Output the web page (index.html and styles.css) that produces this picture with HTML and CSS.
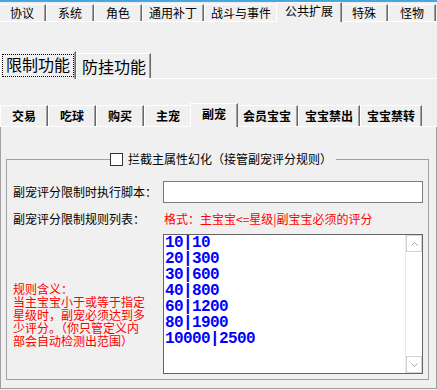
FILE: index.html
```html
<!DOCTYPE html>
<html lang="zh-CN">
<head>
  <meta charset="UTF-8">
  <title>公共扩展 - 副宠</title>
  <link rel="stylesheet" href="styles.css">
</head>
<body>
  <div class="titlebar"></div>

  <!-- top level tabs -->
  <nav class="tabs tabs-top">
    <span class="tab">协议</span>
    <span class="tab">系统</span>
    <span class="tab">角色</span>
    <span class="tab">通用补丁</span>
    <span class="tab">战斗与事件</span>
    <span class="tab active">公共扩展</span>
    <span class="tab">特殊</span>
    <span class="tab">怪物</span>
  </nav>

  <nav class="tabs tabs-big">
    <span class="tab active"><span class="focus">限制功能</span></span>
    <span class="tab">防挂功能</span>
  </nav>

  <nav class="tabs tabs-bold">
    <span class="tab">交易</span>
    <span class="tab">吃球</span>
    <span class="tab">购买</span>
    <span class="tab">主宠</span>
    <span class="tab active">副宠</span>
    <span class="tab">会员宝宝</span>
    <span class="tab">宝宝禁出</span>
    <span class="tab">宝宝禁转</span>
  </nav>

  <div class="panel">
    <fieldset class="group">
      <legend><span class="check"></span>拦截主属性幻化（接管副宠评分规则）</legend>
      <div class="form">
        <label class="label">副宠评分限制时执行脚本：</label>
        <div class="input"></div>

        <label class="label label-small">副宠评分限制规则列表：</label>
        <div class="hint">格式：主宝宝&lt;=星级|副宝宝必须的评分</div>

        <div class="note">规则含义：<br>当主宝宝小于或等于指定<br>星级时，副宠必须达到多<br>少评分。（你只管定义内<br>部会自动检测出范围）</div>
        <div class="memo">
          <div class="memo-text">10|10
20|300
30|600
40|800
60|1200
80|1900
10000|2500</div>
          <div class="scroll">
            <span class="scroll-btn"><svg width="7" height="4" viewBox="0 0 7 4"><polyline points="0.5,3.5 3.5,0.5 6.5,3.5" fill="none" stroke="#a0a0a0"/></svg></span>
            <span class="scroll-btn"><svg width="7" height="4" viewBox="0 0 7 4"><polyline points="0.5,0.5 3.5,3.5 6.5,0.5" fill="none" stroke="#a0a0a0"/></svg></span>
          </div>
        </div>
      </div>
    </fieldset>
  </div>
</body>
</html>
```

FILE: styles.css
```css
* {
  box-sizing: border-box;
}
body {
  margin: 0;
  width: 437px;
  height: 390px;
  overflow: hidden;
  background: #f0f0f0;
  color: #000;
  font-family: "Noto Sans CJK SC", "Noto Sans", sans-serif;
  font-size: 12px;
}
.titlebar {
  height: 2px;
  background: #48a6e0;
}

/* tab strips */
.tabs {
  display: flex;
  align-items: flex-end;
  border-bottom: 1px solid #fff;
}
.tab {
  border-top: 1px solid #fff;
  border-left: 1px solid #fff;
  border-right: 1px solid #696969;
  box-shadow: inset -1px 0 #a0a0a0;
  background: #f0f0f0;
  white-space: nowrap;
  text-align: center;
}
.tab.active {
  position: relative;
  z-index: 1;
  margin-bottom: -1px;
}

.tabs-top {
  height: 20px;
}
.tabs-top .tab {
  height: 17px;
  line-height: 16px;
  min-width: 48px;
  padding: 0 6px;
}
.tabs-top .tab:first-child {
  margin-left: -2px;
}
.tabs-top .tab.active {
  height: 20px;
  margin: 0 -2px -1px;
  padding: 0 8px 3px;
}

.tabs-big {
  height: 57px;
  padding-top: 29px;
}
.tabs-big .tab {
  font-size: 16px;
  height: 25px;
  line-height: 25px;
  padding: 0 4px 0 5px;
}
.tabs-big .tab.active {
  height: 28px;
  padding: 2px 1px;
}
.focus {
  display: block;
  border: 1px dotted #000;
  padding: 0 3px 2px;
  line-height: 19px;
}

.tabs-bold {
  height: 48px;
  padding-top: 24px;
}
.tabs-bold .tab {
  font-weight: bold;
  height: 21px;
  line-height: 20px;
  min-width: 48px;
  padding: 0 6px;
}
.tabs-bold .tab.active {
  height: 24px;
  margin: 0 -2px -1px;
  padding: 0 8px 3px;
  line-height: 19px;
}

/* page */
.panel {
  border-left: 1px solid #a0a0a0;
  border-right: 1px solid #a0a0a0;
  border-bottom: 1px solid #a0a0a0;
  padding: 25px 7px 8px 5px;
}
.group {
  margin: 0;
  min-width: 0;
  border: 1px solid #a0a0a0;
  padding: 15px 5px 5px 6px;
}
.group legend {
  display: flex;
  align-items: center;
  height: 14px;
  line-height: 14px;
  margin-left: 97px;
  padding: 0 4px 0 0;
}
.check {
  width: 13px;
  height: 13px;
  margin-right: 5px;
  border: 1px solid #333;
  background: #fff;
}

.form {
  display: grid;
  grid-template-columns: 150px 1fr;
  grid-template-rows: 22px 15px 140px;
  row-gap: 8px;
}
.label {
  line-height: 22px;
}
.label-small {
  line-height: 15px;
}
.input {
  height: 22px;
  border: 1px solid #7a7a7a;
  background: #fff;
}
.hint {
  color: #f00;
  line-height: 15px;
  padding-left: 1px;
}
.note {
  color: #f00;
  font-family: "Liberation Sans", "Noto Sans CJK SC", sans-serif;
  line-height: 13px;
  margin-top: 50px;
}

.memo {
  display: flex;
  border: 1px solid #646464;
  background: #fff;
}
.memo-text {
  flex: 1;
  padding-left: 1px;
  color: #00f;
  font-family: "Liberation Mono", monospace;
  font-weight: bold;
  font-size: 16px;
  line-height: 16px;
  letter-spacing: -0.6px;
  white-space: pre;
}
.scroll {
  width: 17px;
  display: flex;
  flex-direction: column;
  justify-content: space-between;
  border-left: 1px solid #e8e8e8;
}
.scroll-btn {
  height: 17px;
  display: flex;
  align-items: center;
  justify-content: center;
  border: 1px solid #d4d4d4;
  background: #fff;
}
```
